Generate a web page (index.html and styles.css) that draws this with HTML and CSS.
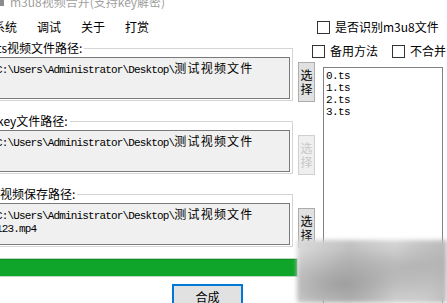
FILE: index.html
```html
<!DOCTYPE html>
<html lang="zh-CN">
<head>
  <meta charset="UTF-8" />
  <title>m3u8视频合并(支持key解密)</title>
  <link rel="stylesheet" href="styles.css">
</head>
<body>
  <div class="window">
    <div class="titlebar"><span class="app_icon"></span>m3u8视频合并(支持key解密)</div>

    <div class="top">
      <nav class="menu">
        <span>系统</span>
        <span>调试</span>
        <span>关于</span>
        <span>打赏</span>
      </nav>
      <label class="check"><span class="box"></span>是否识别m3u8文件</label>
    </div>

    <div class="main">
      <div class="left">
        <div class="group_row">
          <fieldset class="group">
            <legend>ts视频文件路径:</legend>
            <div class="path">C:\Users\Administrator\Desktop\<span class="cjk">测试视频文件</span></div>
          </fieldset>
          <button class="pick"><span>选</span><span>择</span></button>
        </div>

        <div class="group_row">
          <fieldset class="group">
            <legend>key文件路径:</legend>
            <div class="path">C:\Users\Administrator\Desktop\<span class="cjk">测试视频文件</span></div>
          </fieldset>
          <button class="pick" disabled><span>选</span><span>择</span></button>
        </div>

        <div class="group_row">
          <fieldset class="group out">
            <legend>视频保存路径:</legend>
            <div class="path">C:\Users\Administrator\Desktop\<span class="cjk">测试视频文件</span><br>123.mp4</div>
          </fieldset>
          <button class="pick"><span>选</span><span>择</span></button>
        </div>

        <div class="progress"><div class="progress_fill" style="width: 100%"></div></div>

        <button class="merge">合成</button>
      </div>

      <div class="right">
        <div class="checks">
          <label class="check"><span class="box"></span>备用方法</label>
          <label class="check"><span class="box"></span>不合并</label>
        </div>
        <div class="list">
          <div>0.ts</div>
          <div>1.ts</div>
          <div>2.ts</div>
          <div>3.ts</div>
        </div>
      </div>
    </div>

    <!-- marca d'agua borrada no canto -->
    <div class="watermark"></div>
  </div>
</body>
</html>
```

FILE: styles.css
```css
body {
  margin: 0;
  background: #fff;
  font-family: "Noto Sans CJK SC", sans-serif;
  font-size: 12px;
  color: #000;
}

.window {
  position: relative;
  width: 447px;
  height: 303px;
  overflow: hidden;
  background: #fff;
}

.titlebar {
  margin-top: -4px;
  height: 12px;
  line-height: 12px;
  padding-left: 10px;
  color: #a0a0a0;
  white-space: nowrap;
  display: flex;
  align-items: center;
}

.app_icon {
  width: 4px;
  height: 8px;
  background: #8c8c8c;
  margin-left: -10px;
  margin-right: 6px;
}

.top {
  display: grid;
  grid-template-columns: 317px 1fr;
  padding-top: 12px;
  height: 14px;
  line-height: 14px;
}

.menu {
  display: flex;
  gap: 20px;
  margin-left: -7px;
}

.check {
  display: flex;
  align-items: center;
  gap: 5px;
  white-space: nowrap;
  line-height: 14px;
}

.check .box {
  width: 11px;
  height: 11px;
  border: 1px solid #333;
  background: #fff;
  flex: none;
}

.main {
  display: grid;
  grid-template-columns: 315px 1fr;
}

.left {
  margin-left: -12px;
  width: 327px;
  padding-top: 7px;
}

.group_row {
  display: flex;
  align-items: flex-start;
  gap: 5px;
}

.group_row + .group_row {
  margin-top: 12px;
}

.group {
  margin: 0;
  padding: 0 2px 1px 3px;
  min-width: 0;
  width: 306px;
  box-sizing: border-box;
  border: 1px solid #d5d5d5;
}

.group legend {
  margin-left: 5px;
  padding: 0 2px 0 0;
  line-height: 14px;
  height: 14px;
}

.group.out legend {
  margin-left: 8px;
}

.path {
  margin-top: 2px;
  height: 42px;
  box-sizing: border-box;
  border: 1px solid #7a7a7a;
  background: #f0f0f0;
  padding: 3px 3px;
  font: 11px/13px "Liberation Mono", monospace;
  letter-spacing: -0.85px;
  white-space: nowrap;
  overflow: hidden;
}

.cjk {
  font-family: "Noto Sans CJK SC", sans-serif;
  font-size: 12px;
  letter-spacing: 1.2px;
}

.pick {
  width: 17px;
  height: 40px;
  margin-top: 21px;
  padding: 0;
  border: 1px solid #adadad;
  background: #e1e1e1;
  font: 12px/14px "Noto Sans CJK SC", sans-serif;
  color: #000;
  flex: none;
  display: flex;
  flex-direction: column;
  align-items: center;
  justify-content: center;
}

.pick span {
  display: block;
  height: 14px;
}

.pick:disabled {
  background: #efefef;
  border-color: #d0d0d0;
  color: #c8c8c8;
}

.progress {
  margin-top: 10px;
  width: 310px;
  height: 19px;
  box-sizing: border-box;
  border: 1px solid #bcd8c0;
  background: #e6e6e6;
}

.progress_fill {
  height: 100%;
  background: #0fa52a;
  border-top: 1px solid #0b8f22;
  box-sizing: border-box;
}

.merge {
  display: block;
  margin: 7px 0 0 184px;
  width: 71px;
  height: 24px;
  padding: 0;
  border: 1px solid #0078d7;
  box-shadow: inset 0 0 0 1px #0078d7;
  background: #e1e1e1;
  font: 12px "Noto Sans CJK SC", sans-serif;
  color: #000;
}

.right {
  padding-top: 10px;
}

.checks {
  display: flex;
  gap: 14px;
  margin-left: -3px;
  height: 14px;
}

.list {
  margin: 9px 0 0 8px;
  width: 120px;
  height: 250px;
  box-sizing: border-box;
  border: 1px solid #828282;
  background: #fff;
  padding: 2px 2px;
  font: 11px/12px "Liberation Mono", monospace;
  letter-spacing: -0.6px;
}

.watermark {
  position: absolute;
  left: 297px;
  top: 240px;
  width: 150px;
  height: 63px;
  background:
    radial-gradient(ellipse at 30% 70%, rgba(150,150,150,0.8), rgba(150,150,150,0) 60%),
    radial-gradient(ellipse at 80% 40%, rgba(170,170,170,0.7), rgba(170,170,170,0) 55%),
    linear-gradient(90deg, #d9d9d9, #c2c2c2 35%, #dcdcdc 65%, #bdbdbd);
  filter: blur(2px);
}
```
